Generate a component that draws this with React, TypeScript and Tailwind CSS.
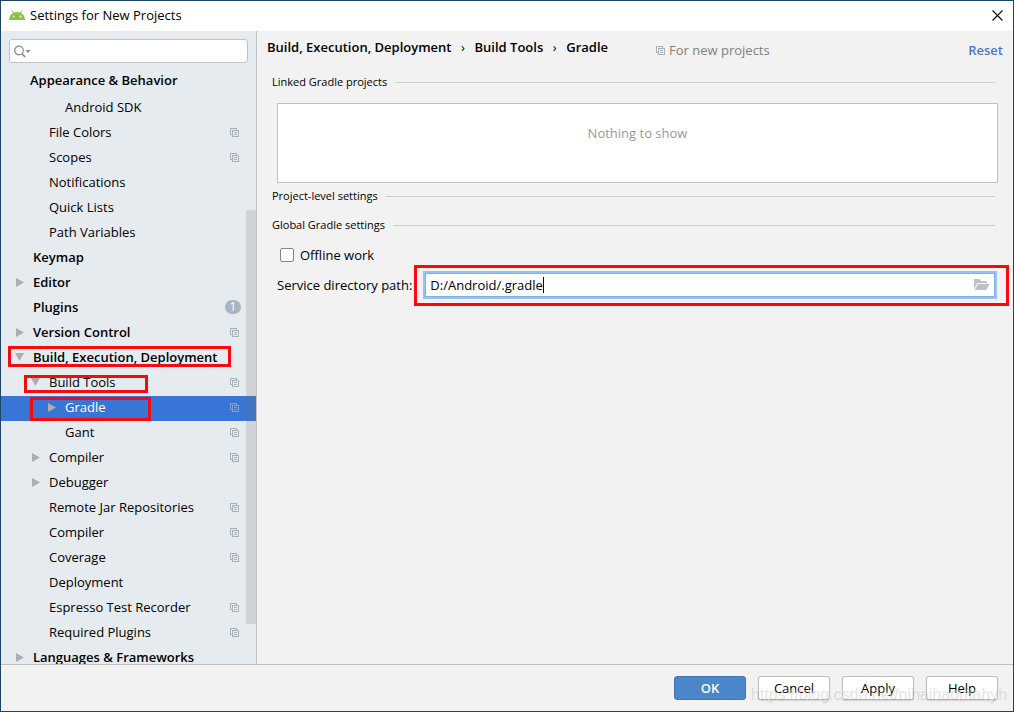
import { useState } from "react";
import { cva } from "class-variance-authority";
import clsx from "clsx";

interface TreeItem {
  label: string;
  level: 0 | 1 | 2;
  arrow?: "open" | "closed";
  copy?: boolean;
  badge?: number;
  mark?: string;
}

const TREE: TreeItem[] = [
  { label: "Android SDK", level: 2 },
  { label: "File Colors", level: 1, copy: true },
  { label: "Scopes", level: 1, copy: true },
  { label: "Notifications", level: 1 },
  { label: "Quick Lists", level: 1 },
  { label: "Path Variables", level: 1 },
  { label: "Keymap", level: 0 },
  { label: "Editor", level: 0, arrow: "closed" },
  { label: "Plugins", level: 0, badge: 1 },
  { label: "Version Control", level: 0, arrow: "closed", copy: true },
  {
    label: "Build, Execution, Deployment",
    level: 0,
    arrow: "open",
    mark: "left-[7px] top-0 h-[21px] w-[223px]",
  },
  {
    label: "Build Tools",
    level: 1,
    arrow: "open",
    copy: true,
    mark: "left-[23px] top-1 h-[18px] w-[124px]",
  },
  {
    label: "Gradle",
    level: 2,
    arrow: "closed",
    copy: true,
    mark: "left-[29px] top-px h-[24px] w-[121px]",
  },
  { label: "Gant", level: 2, copy: true },
  { label: "Compiler", level: 1, arrow: "closed", copy: true },
  { label: "Debugger", level: 1, arrow: "closed" },
  { label: "Remote Jar Repositories", level: 1, copy: true },
  { label: "Compiler", level: 1, copy: true },
  { label: "Coverage", level: 1, copy: true },
  { label: "Deployment", level: 1 },
  { label: "Espresso Test Recorder", level: 1, copy: true },
  { label: "Required Plugins", level: 1, copy: true },
  { label: "Languages & Frameworks", level: 0, arrow: "closed" },
];

const SELECTED = 12;

const row = cva("relative flex h-[25px] w-full items-center pr-[17px] pb-[3px] text-left whitespace-nowrap", {
  variants: {
    level: {
      0: "pl-[14px] font-semibold",
      1: "pl-[30px]",
      2: "pl-[46px]",
    },
    selected: {
      true: "bg-[#3875d7] text-white",
      false: "",
    },
  },
});

function AndroidIcon() {
  return (
    <svg width="16" height="10" viewBox="0 0 16 10" aria-hidden="true">
      <path d="M3 .5 4.8 3M13 .5 11.2 3" stroke="#8bc34a" strokeWidth="1" />
      <path d="M0 10C.2 5 3.600 1.900 8 1.900S15.800 5 16 10z" fill="#8bc34a" />
      <circle cx="4.500" cy="6.500" r=".9" fill="#fff" />
      <circle cx="11.500" cy="6.500" r=".9" fill="#fff" />
    </svg>
  );
}

function CopyIcon() {
  return (
    <svg
      width="9"
      height="9"
      viewBox="0 0 9 9"
      fill="none"
      stroke="#9aa7b0"
      strokeOpacity=".85"
      shapeRendering="crispEdges"
      className="shrink-0"
      aria-hidden="true"
    >
      <path d="M2 6.500H.5v-6h6V2M2.500 2.500h6v6h-6zM4 4.500h3M4 6.500h3" />
    </svg>
  );
}

function Arrow({ state }: { state?: "open" | "closed" }) {
  return (
    <svg width="10" height="10" viewBox="0 0 10 10" fill="#adadad" className="mr-2 shrink-0" aria-hidden="true">
      {state === "closed" && <path d="M1 1v9l8-4.500z" />}
      {state === "open" && <path d="M0 1h9l-4.500 8z" />}
    </svg>
  );
}

function FolderIcon() {
  return (
    <svg width="16" height="12" viewBox="0 0 16 12" fill="#bcc1c5" aria-hidden="true">
      <path d="M0 10V0h5.500L7 2h6v2H3.500z" />
      <path d="M4 5h11.500L12.500 11H.6z" />
    </svg>
  );
}

/** Section heading followed by a thin rule */
function SectionTitle({ children }: { children: string }) {
  return (
    <h2 className="mr-[14px] flex h-4 items-center gap-2 text-[11px]">
      {children}
      <span className="h-px flex-1 bg-[#cdcdcd]" />
    </h2>
  );
}

function Sidebar() {
  const [selected, setSelected] = useState(SELECTED);

  return (
    <aside className="relative flex w-64 shrink-0 flex-col border-r border-[#c0c0c0] bg-[#e6ebf0]">
      <label className="mx-2 mt-2 flex h-6 items-center rounded-[3px] border border-[#c0c3c5] bg-white pl-1">
        <svg width="17" height="13" viewBox="0 0 17 13" fill="none" aria-hidden="true">
          <circle cx="5" cy="5.500" r="4.300" stroke="#7f8b91" strokeWidth="1.200" />
          <path d="m8 8.700 3.200 3.300" stroke="#7f8b91" strokeWidth="1.600" />
          <path d="M11.500 5h5L14 8z" fill="#7f8b91" />
        </svg>
        <input type="text" aria-label="Search settings" className="min-w-0 flex-1 outline-none" />
      </label>
      <h2 className="flex h-[33px] items-center pl-[29px] font-semibold">Appearance &amp; Behavior</h2>
      <ul className="min-h-0 flex-1 overflow-hidden">
        {TREE.map((item, i) => (
          <li key={i}>
            <button
              type="button"
              onClick={() => setSelected(i)}
              className={row({ level: item.level, selected: i === selected })}
            >
              <Arrow state={item.arrow} />
              <span className="flex-1">{item.label}</span>
              {item.copy && <CopyIcon />}
              {item.badge && (
                <span className="-mr-0.5 flex h-[14px] w-4 items-center justify-center rounded-full bg-[#a9b6bf] text-xs font-normal text-white">
                  {item.badge}
                </span>
              )}
              {item.mark && <span className={clsx("absolute z-10 border-3 border-[#f50b0b]", item.mark)} />}
            </button>
          </li>
        ))}
      </ul>
      {/* scrollbar thumb */}
      <div className="absolute top-[179px] right-0 h-[414px] w-[10px] bg-[#737373]/20" />
    </aside>
  );
}

function GradleSettings() {
  const [path, setPath] = useState("D:/Android/.gradle");

  return (
    <main className="min-w-0 flex-1 bg-[#f2f2f2]">
      <header className="flex h-8 items-center px-[10px] whitespace-nowrap">
        <nav className="flex items-center font-semibold">
          <span>Build, Execution, Deployment</span>
          <span className="w-[23px] text-center font-normal">›</span>
          <span>Build Tools</span>
          <span className="w-[23px] text-center font-normal">›</span>
          <span>Gradle</span>
        </nav>
        <span className="ml-12 flex items-center gap-1 pt-1.5 text-[#808080]">
          <CopyIcon />
          For new projects
        </span>
        <a href="#reset" className="ml-auto pt-1.5 font-semibold text-[#4a78c8]">
          Reset
        </a>
      </header>

      <div className="pt-[11px] pr-[4px] pl-[15px]">
        <SectionTitle>Linked Gradle projects</SectionTitle>
        <div className="mt-[13px] mr-[11px] ml-[5px] flex h-20 justify-center border border-[#c0c0c0] bg-white pt-[19px] text-[#999]">
          Nothing to show
        </div>
        <div className="mt-[5px]">
          <SectionTitle>Project-level settings</SectionTitle>
        </div>
        <div className="mt-[13px]">
          <SectionTitle>Global Gradle settings</SectionTitle>
        </div>
        <label className="mt-3 ml-2 flex h-5 w-fit items-center gap-1.5">
          <input type="checkbox" className="size-[14px] appearance-none rounded-[2px] border border-[#878787] bg-white checked:bg-[#4a88c7]" />
          Offline work
        </label>
        <div className="ml-[5px] flex items-center gap-0.5 whitespace-nowrap">
          <label htmlFor="service-path" className="pb-0.5">
            Service directory path:
          </label>
          <div className="h-[41px] min-w-0 flex-1 border-3 border-[#f50b0b] pt-[3px] pr-[9px] pl-[6px]">
            <div className="flex h-7 items-center border-2 border-[#97c3f3] bg-white px-[5px] inset-ring inset-ring-[#87afda]">
              <input
                id="service-path"
                type="text"
                value={path}
                onChange={(e) => setPath(e.target.value)}
                className="field-sizing-content outline-none"
              />
              <span className="h-4 w-px bg-black" />
              <button type="button" aria-label="Browse" className="ml-auto">
                <FolderIcon />
              </button>
            </div>
          </div>
        </div>
      </div>
    </main>
  );
}

export default function App() {
  return (
    <div className="flex h-screen flex-col border border-[#1d4568] bg-[#f2f2f2] font-['Open_Sans','Noto_Sans',sans-serif] text-[13px] leading-5 text-black">
      <div className="flex h-[30px] shrink-0 items-center bg-white pr-[10px] pb-0.5 pl-2">
        <AndroidIcon />
        <h1 className="ml-[5px]">Settings for New Projects</h1>
        <button type="button" aria-label="Close" className="ml-auto">
          <svg width="11" height="11" viewBox="0 0 11 11" stroke="#000" strokeWidth="1.100" aria-hidden="true">
            <path d="m.5.5 10 10M10.500.5l-10 10" />
          </svg>
        </button>
      </div>

      <div className="flex min-h-0 flex-1">
        <Sidebar />
        <GradleSettings />
      </div>

      <footer className="relative flex h-[47px] shrink-0 items-start justify-end gap-3 border-t border-[#c0c0c0] pt-[11px] pr-[15px]">
        <button type="button" className="h-6 w-[72px] rounded-[3px] border border-[#3d75b8] bg-[#4a86c8] font-semibold text-white">
          OK
        </button>
        {["Cancel", "Apply", "Help"].map((label) => (
          <button
            key={label}
            type="button"
            className="h-6 w-[72px] rounded-[3px] border border-[#bdbdbd] bg-white shadow-[0_1px_1px_#d4d4d4]"
          >
            {label}
          </button>
        ))}
        <span className="pointer-events-none absolute right-[7px] bottom-[5px] font-['Liberation_Sans',sans-serif] text-base text-white/40 [text-shadow:1px_1px_1px_#00000026]">
          https://blog.csdn.net/nihaihaomahyh
        </span>
      </footer>
    </div>
  );
}
